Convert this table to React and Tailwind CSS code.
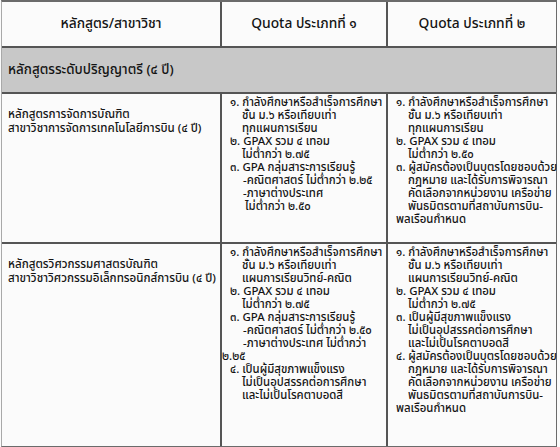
const font = { fontFamily: '"Noto Sans Thai", "Loma", "Garuda", "Tahoma", "Noto Sans", sans-serif' }

const rows = [
  {
    name: ["หลักสูตรการจัดการบัณฑิต", "สาขาวิชาการจัดการเทคโนโลยีการบิน (๔ ปี)"],
    height: "h-[150px]",
    q1: [
      [0, "๑. กำลังศึกษาหรือสำเร็จการศึกษา"],
      [1, "ชั้น ม.๖ หรือเทียบเท่า"],
      [1, "ทุกแผนการเรียน"],
      [0, "๒. GPAX รวม ๔ เทอม"],
      [1, "ไม่ต่ำกว่า ๒.๗๕"],
      [0, "๓. GPA กลุ่มสาระการเรียนรู้"],
      [2, "-คณิตศาสตร์ ไม่ต่ำกว่า ๒.๒๕"],
      [2, "-ภาษาต่างประเทศ"],
      [3, "ไม่ต่ำกว่า ๒.๕๐"],
    ],
    q2: [
      [0, "๑. กำลังศึกษาหรือสำเร็จการศึกษา"],
      [1, "ชั้น ม.๖ หรือเทียบเท่า"],
      [1, "ทุกแผนการเรียน"],
      [0, "๒. GPAX รวม ๔ เทอม"],
      [1, "ไม่ต่ำกว่า ๒.๕๐"],
      [0, "๓. ผู้สมัครต้องเป็นบุตรโดยชอบด้วย"],
      [1, "กฎหมาย และได้รับการพิจารณา"],
      [1, "คัดเลือกจากหน่วยงาน เครือข่าย"],
      [1, "พันธมิตรตามที่สถาบันการบิน-"],
      [0, "พลเรือนกำหนด"],
    ],
  },
  {
    name: ["หลักสูตรวิศวกรรมศาสตรบัณฑิต", "สาขาวิชาวิศวกรรมอิเล็กทรอนิกส์การบิน (๔ ปี)"],
    height: "h-[202px]",
    q1: [
      [0, "๑. กำลังศึกษาหรือสำเร็จการศึกษา"],
      [1, "ชั้น ม.๖ หรือเทียบเท่า"],
      [1, "แผนการเรียนวิทย์-คณิต"],
      [0, "๒. GPAX รวม ๔ เทอม"],
      [1, "ไม่ต่ำกว่า ๒.๗๕"],
      [0, "๓. GPA กลุ่มสาระการเรียนรู้"],
      [2, "-คณิตศาสตร์ ไม่ต่ำกว่า ๒.๕๐"],
      [2, "-ภาษาต่างประเทศ ไม่ต่ำกว่า"],
      [4, "๒.๒๕"],
      [0, "๔. เป็นผู้มีสุขภาพแข็งแรง"],
      [1, "ไม่เป็นอุปสรรคต่อการศึกษา"],
      [1, "และไม่เป็นโรคตาบอดสี"],
    ],
    q2: [
      [0, "๑. กำลังศึกษาหรือสำเร็จการศึกษา"],
      [1, "ชั้น ม.๖ หรือเทียบเท่า"],
      [1, "แผนการเรียนวิทย์-คณิต"],
      [0, "๒. GPAX รวม ๔ เทอม"],
      [1, "ไม่ต่ำกว่า ๒.๗๕"],
      [0, "๓. เป็นผู้มีสุขภาพแข็งแรง"],
      [1, "ไม่เป็นอุปสรรคต่อการศึกษา"],
      [1, "และไม่เป็นโรคตาบอดสี"],
      [0, "๔. ผู้สมัครต้องเป็นบุตรโดยชอบด้วย"],
      [1, "กฎหมาย และได้รับการพิจารณา"],
      [1, "คัดเลือกจากหน่วยงาน เครือข่าย"],
      [1, "พันธมิตรตามที่สถาบันการบิน-"],
      [0, "พลเรือนกำหนด"],
    ],
  },
]

const indents = ["pl-[8px]", "pl-[20px]", "pl-[21px]", "pl-[23px]", "pl-0"]

function Lines({ items }) {
  return (
    <div className="pt-[2px] text-[11.4px] leading-[13px]">
      {items.map(([lvl, text], i) => (
        <div key={i} className={`${indents[lvl]} whitespace-nowrap`}>{text}</div>
      ))}
    </div>
  )
}

export default function App() {
  return (
    <div className="h-[447px] w-[560px] overflow-hidden bg-[#fbfbfb] font-medium text-[#141414]" style={font}>
      <div className="ml-[1px] w-[556px] border border-t-2 border-[#6b6b6b] border-l-[#a9a9a9]">
        {/* header */}
        <div className="grid h-[46px] grid-cols-[220px_166px_168px] border-b-2 border-[#555]">
          <div className="flex items-center justify-center border-r-2 border-[#555] text-[13.8px]">หลักสูตร/สาขาวิชา</div>
          <div className="flex items-center justify-center border-r-2 border-[#555] text-[13.8px]">Quota ประเภทที่ ๑</div>
          <div className="flex items-center justify-center text-[13.8px]">Quota ประเภทที่ ๒</div>
        </div>

        <div className="flex h-[46px] items-center border-b-2 border-[#555] bg-[#c8c8c8] pl-[6px] text-[13.4px]">
          หลักสูตรระดับปริญญาตรี (๔ ปี)
        </div>

        {rows.map((r, i) => (
          <div key={i} className={`grid ${r.height} grid-cols-[220px_166px_168px] ${i === 0 ? "border-b-2 border-[#555]" : ""}`}>
            <div className="border-r-2 border-[#555] pl-[6px] pt-[14px] text-[11.6px] leading-[14px] whitespace-nowrap">
              {r.name.map((t) => <div key={t}>{t}</div>)}
            </div>
            <div className="border-r-2 border-[#555]">
              <Lines items={r.q1} />
            </div>
            <div>
              <Lines items={r.q2} />
            </div>
          </div>
        ))}
      </div>
    </div>
  )
}
